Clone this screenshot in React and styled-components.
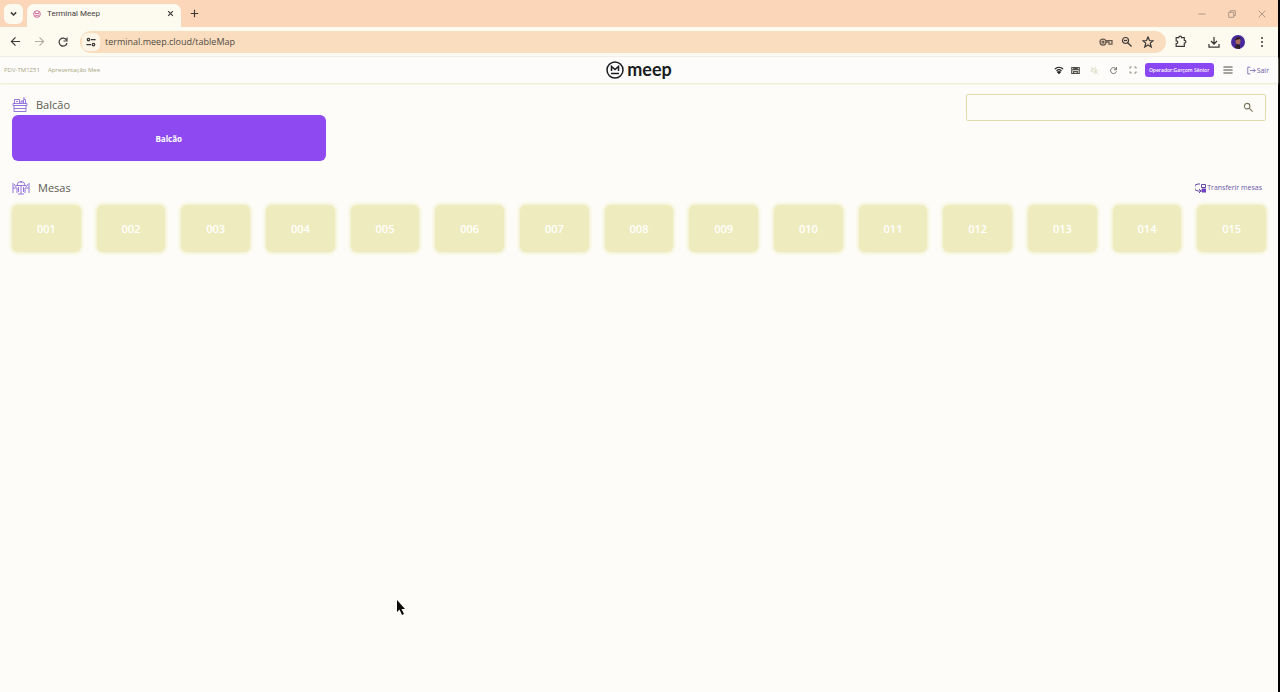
import React from "react";
import styled, { createGlobalStyle } from "styled-components";

const Global = createGlobalStyle`
  * { box-sizing: border-box; }
  body { margin: 0; font-family: "Open Sans", "Noto Sans", sans-serif; color: #55524c; background: #fdfcf8; }
  button, input { font: inherit; color: inherit; }
`;

const Page = styled.div`
  min-height: 100vh;
  border-right: 2px solid #000;
  background: #fdfcf8;
`;

const TabStrip = styled.div`
  display: flex;
  align-items: center;
  height: 27px;
  padding-left: 4px;
  background: #fbd6b9;
`;

const IconButton = styled.button`
  display: flex;
  align-items: center;
  justify-content: center;
  flex: none;
  width: ${(p) => p.$w || 24}px;
  height: ${(p) => p.$h || 20}px;
  padding: 0;
  border: 0;
  border-radius: 6px;
  background: ${(p) => p.$bg || "none"};
  color: ${(p) => p.$color || "#3b3937"};
`;

const Tab = styled.div`
  display: flex;
  align-items: center;
  align-self: flex-end;
  gap: 6px;
  width: 154px;
  height: 23px;
  margin-left: 4px;
  padding: 0 2px 4px 6px;
  border-radius: 7px 7px 0 0;
  background: #fdfaf0;
  font-size: 8px;
`;

const TabTitle = styled.span`
  flex: 1;
  font-family: Roboto, sans-serif;
  color: #45413d;
`;

const WindowControls = styled.div`
  display: flex;
  gap: 6px;
  margin-left: auto;
  padding-right: 4px;
`;

const Toolbar = styled.div`
  display: flex;
  align-items: center;
  height: 30px;
  padding: 0 4px 0 3px;
  background: #fdfaf0;
  border-bottom: 1px solid #f1eeea;
`;

const BrowserActions = styled.div`
  display: flex;
  align-items: center;
  margin-left: 10px;
`;

const AddressBar = styled.div`
  display: flex;
  align-items: center;
  flex: 1;
  height: 22px;
  margin: 0 2px 0 5px;
  padding: 0 8px 0 2px;
  border-radius: 11px;
  background: #f9ddbe;
`;

const Address = styled.input`
  flex: 1;
  min-width: 0;
  padding: 0;
  margin-left: 5px;
  border: 0;
  outline: 0;
  background: none;
  font-size: 9px;
  color: #514a43;
`;

const AppHeader = styled.header`
  display: grid;
  grid-template-columns: 1fr auto 1fr;
  align-items: center;
  height: 26px;
  padding: 0 4px;
  background: #fdfcfb;
  box-shadow: 0 1px 2px #e9e8cc;
`;

const Terminal = styled.div`
  display: flex;
  gap: 8px;
  font-size: 6px;
  color: #a8a67c;
`;

const Logo = styled.div`
  display: flex;
  align-items: center;
  gap: 3px;
  height: 20px;
  font: 700 18px/18px Lato, sans-serif;
  color: #191c20;
`;

const LogoName = styled.span`
  height: 20px;
`;

const Actions = styled.div`
  display: flex;
  align-items: center;
  justify-content: flex-end;
  padding-right: 5px;
`;

const Operator = styled.button`
  width: 69px;
  height: 14px;
  margin: 0 4px 0 2px;
  padding: 0;
  border: 0;
  border-radius: 3px;
  background: #8b46f3;
  color: #fff;
  font-size: 5px;
  font-weight: 600;
  line-height: 14px;
  white-space: nowrap;
`;

const TextLink = styled.a`
  display: flex;
  align-items: center;
  gap: 1px;
  margin-left: ${(p) => p.$gap || 0}px;
  font-size: 7px;
  color: #6c58a8;
  text-decoration: none;
  white-space: nowrap;
`;

const Main = styled.main`
  padding: 11px 12px;
`;

const Top = styled.div`
  display: flex;
  align-items: flex-start;
  justify-content: space-between;
`;

const Counter = styled.section`
  width: 25%;
`;

const Heading = styled.h2`
  display: flex;
  align-items: center;
  gap: 8px;
  height: 21px;
  margin: 0;
  font-size: 11px;
  font-weight: 400;
  color: #5b5b50;
`;

const CounterButton = styled.button`
  display: block;
  width: 100%;
  height: 46px;
  padding: 0;
  border: 0;
  border-radius: 6px;
  background: #8f49f0;
  color: #fff;
  font-size: 8px;
  font-weight: 700;
`;

const Search = styled.label`
  display: flex;
  align-items: center;
  width: 300px;
  height: 27px;
  padding-right: 11px;
  border: 1px solid #dddcae;
  border-radius: 2px;
  color: #77755c;
`;

const SearchInput = styled.input`
  flex: 1;
  min-width: 0;
  padding: 0 8px;
  border: 0;
  outline: 0;
  background: none;
  font-size: 9px;
`;

const TablesHead = styled.div`
  display: flex;
  align-items: center;
  justify-content: space-between;
  margin: 16px 4px 7px 0;
`;

const Tables = styled.div`
  display: grid;
  grid-template-columns: repeat(15, 1fr);
  gap: 16px;
`;

const TableTile = styled.button`
  height: 47px;
  padding: 0;
  border: 0;
  border-radius: 6px;
  background: #eeecbe;
  box-shadow: 0 0 3px 2px #f4f3d6;
  color: #fff;
  font-size: 11px;
  font-weight: 600;
`;

const Pointer = styled.svg`
  position: absolute;
  left: 396px;
  top: 599px;
`;

const Icon = ({ size = 12, w, box = 24, stroke = 2, children }) => (
  <svg width={w || size} height={size} viewBox={typeof box === "string" ? box : `0 0 ${box} ${box}`} fill="none"
    stroke="currentColor" strokeWidth={stroke} aria-hidden="true">{children}</svg>
);

const Reload = ({ size }) => (
  <Icon size={size} stroke={2.4}><path d="M19 8a8 8 0 1 0 1 6" /><path d="M20 3v7h-7" /></Icon>
);

const Magnifier = ({ size, minus }) => (
  <Icon size={size} stroke={2.4}><circle cx="9" cy="9" r="6" /><path d="m14 14 7 7" />{minus && <path d="M6 9h6" />}</Icon>
);

const CounterIcon = () => (
  <Icon w={16} size={16} box={16} stroke={1}>
    <g stroke="#9477dc">
      <path d="M1 6.5h14v2H1zM2 8.5v6h12v-6M2 11.5h12M2.5 6V2.5h5V6M4 4.5h2M9 6V4h2v2M11.5 6V2.5h2V6M11 1h2" />
    </g>
  </Icon>
);

const TablesIcon = () => (
  <Icon w={18} size={14} box="0 0 18 14" stroke={1}>
    <g stroke="#9477dc">
      <path d="M1 2v10M1 7h4v5M17 2v10M17 7h-4v5M4 4.5h10M5 4.5a4 4 0 0 1 8 0M9 4.5V13M6 13h6M6.500 6v5M11.500 6v5M2 3l2 3M16 3l-2 3" />
      <circle cx="9" cy="1" r=".5" />
    </g>
  </Icon>
);

const tables = Array.from({ length: 15 }, (_, i) => String(i + 1).padStart(3, "0"));

export default function App() {
  return (
    <>
      <Global />
      <Page>
        <TabStrip>
          <IconButton $w={19} $bg="#fdfaf0" aria-label="Pesquisar guias">
            <Icon size={9} stroke={4}><path d="m5 9 7 7 7-7" /></Icon>
          </IconButton>
          <Tab>
            <Icon size={8} stroke={2.5}>
              <g stroke="#c4518f"><circle cx="12" cy="12" r="10" /><path d="M7 13V8l5 4 5-4v5M7 17h10" /></g>
            </Icon>
            <TabTitle>Terminal Meep</TabTitle>
            <IconButton $w={18} aria-label="Fechar guia">
              <Icon size={7} stroke={4}><path d="m4 4 16 16M20 4 4 20" /></Icon>
            </IconButton>
          </Tab>
          <IconButton $w={26} aria-label="Nova guia">
            <Icon size={9} stroke={3}><path d="M12 2v20M2 12h20" /></Icon>
          </IconButton>
          <WindowControls>
            <IconButton $color="#8d7c70" aria-label="Minimizar">
              <Icon size={8}><path d="M1 12h22" /></Icon>
            </IconButton>
            <IconButton $color="#8d7c70" aria-label="Restaurar">
              <Icon size={8}><path d="M2 7h15v15H2zM7 7V2h15v15h-5" /></Icon>
            </IconButton>
            <IconButton $color="#8d7c70" aria-label="Fechar">
              <Icon size={8}><path d="m2 2 20 20M22 2 2 22" /></Icon>
            </IconButton>
          </WindowControls>
        </TabStrip>

        <Toolbar>
          <IconButton aria-label="Voltar">
            <Icon size={11} stroke={2.5}><path d="M22 12H4M12 3l-9 9 9 9" /></Icon>
          </IconButton>
          <IconButton $color="#b3aea4" aria-label="Avançar">
            <Icon size={11} stroke={2.5}><path d="M2 12h18M12 3l9 9-9 9" /></Icon>
          </IconButton>
          <IconButton aria-label="Recarregar"><Reload size={12} /></IconButton>
          <AddressBar>
            <IconButton $w={18} $h={18} $bg="#fdf6e8" aria-label="Informações do site">
              <Icon size={10} stroke={3}>
                <circle cx="6" cy="6" r="3" /><path d="M12 6h11M1 18h11" /><circle cx="18" cy="18" r="3" />
              </Icon>
            </IconButton>
            <Address aria-label="Endereço" defaultValue="terminal.meep.cloud/tableMap" />
            <IconButton $w={21} $color="#67594e" aria-label="Senhas">
              <Icon w={14} size={10} box="0 0 28 20" stroke={2.5}>
                <circle cx="8" cy="10" r="6" /><circle cx="8" cy="10" r="2" /><path d="M14 7h12v7h-6v-4h-6" />
              </Icon>
            </IconButton>
            <IconButton $w={21} aria-label="Zoom"><Magnifier size={12} minus /></IconButton>
            <IconButton $w={21} aria-label="Favoritar">
              <Icon size={12} stroke={2.4}><path d="m12 2 3 7 7 .6-5.500 4.700L18.500 22 12 18l-6.500 4 2-7.700L2 9.600 9 9z" /></Icon>
            </IconButton>
          </AddressBar>
          <IconButton aria-label="Extensões">
            <Icon size={13} stroke={2.2}><path d="M4 5h5c0-4 5-4 5 0h5v5c4 0 4 5 0 5v6H4v-5c4 0 4-5 0-5z" /></Icon>
          </IconButton>
          <BrowserActions>
            <IconButton aria-label="Downloads">
              <Icon size={12} stroke={2.5}><path d="M12 2v14M6 10l6 6 6-6M2 16v6h20v-6" /></Icon>
            </IconButton>
            <IconButton aria-label="Perfil">
              <svg width="14" height="14" viewBox="0 0 14 14" aria-hidden="true">
                <circle cx="7" cy="7" r="7" fill="#46289a" />
                <ellipse cx="7" cy="6" rx="2.500" ry="3.500" fill="#a9695c" />
                <path d="M4 6c0-5 6-5 6-1l-1-1-4 1zM4 13l1-4 4 1v4z" fill="#30202c" />
              </svg>
            </IconButton>
            <IconButton aria-label="Menu do navegador">
              <svg width="4" height="12" viewBox="0 0 4 12" fill="currentColor" aria-hidden="true">
                <circle cx="2" cy="2" r="1" /><circle cx="2" cy="6" r="1" /><circle cx="2" cy="10" r="1" />
              </svg>
            </IconButton>
          </BrowserActions>
        </Toolbar>

        <AppHeader>
          <Terminal><span>PDV-TM1Z51</span><span>Apresentação Mee</span></Terminal>
          <Logo>
            <Icon size={18} box={18} stroke={1.5}>
              <circle cx="9" cy="9" r="8" /><path d="M5.500 10V5.500L9 8.500l3.500-3V10M5 12.500h8" />
            </Icon>
            <LogoName>meep</LogoName>
          </Logo>
          <Actions>
            <IconButton $w={16} $color="#222" aria-label="Rede">
              <Icon size={10} stroke={3}><path d="M2 10c6-6 14-6 20 0M6 14c4-4 8-4 12 0" /><path d="m9 17 3 3 3-3-3-1z" fill="currentColor" /></Icon>
            </IconButton>
            <IconButton $w={18} $color="#4d4d45" aria-label="Impressora">
              <Icon size={9} stroke={3}><path d="M2 4h20v16H2zM2 10h20M7 20v-5h10v5M6 7h12" /></Icon>
            </IconButton>
            <IconButton $w={20} $color="#d8d7bd" aria-label="Som desativado">
              <Icon size={9}><path d="M3 9h5l6-5v16l-6-5H3zM2 2l20 20M18 8v8" /></Icon>
            </IconButton>
            <IconButton $w={18} $color="#66655a" aria-label="Atualizar"><Reload size={9} /></IconButton>
            <IconButton $w={20} $color="#8a897c" aria-label="Tela cheia">
              <Icon size={8} stroke={3}><path d="M3 8V3h5M16 3h5v5M21 16v5h-5M8 21H3v-5" /></Icon>
            </IconButton>
            <Operator>Operador:Garçom Sênior</Operator>
            <IconButton $w={20} $color="#4c4c43" aria-label="Menu">
              <Icon size={10} stroke={2.5}><path d="M1 5h22M1 12h22M1 19h22" /></Icon>
            </IconButton>
            <TextLink href="#sair" $gap={9}>
              <Icon size={9}><path d="M9 3H2v18h7M8 12h14M17 7l5 5-5 5" /></Icon>Sair
            </TextLink>
          </Actions>
        </AppHeader>

        <Main>
          <Top>
            <Counter>
              <Heading><CounterIcon />Balcão</Heading>
              <CounterButton>Balcão</CounterButton>
            </Counter>
            <Search>
              <SearchInput type="search" aria-label="Buscar mesa" />
              <Magnifier size={11} />
            </Search>
          </Top>
          <TablesHead>
            <Heading><TablesIcon />Mesas</Heading>
            <TextLink href="#transferir">
              <svg width="11" height="10" viewBox="0 0 11 10" fill="none" stroke="#6545a5" aria-hidden="true">
                <path d="M5 1H3a3 3 0 0 0 0 7h2M4 6l2 2-2 2M6.500 1.500h4v3h-4z" /><path d="M7 6h4v3H7z" fill="#7c3ee0" />
              </svg>
              Transferir mesas
            </TextLink>
          </TablesHead>
          <Tables>
            {tables.map((name) => <TableTile key={name}>{name}</TableTile>)}
          </Tables>
        </Main>
        <Pointer width="10" height="17" viewBox="0 0 10 17" aria-hidden="true">
          <path d="M1 1v12l2.500-2.500L6 16l2-1-2.500-5H9z" fill="#0b0b0b" />
        </Pointer>
      </Page>
    </>
  );
}
